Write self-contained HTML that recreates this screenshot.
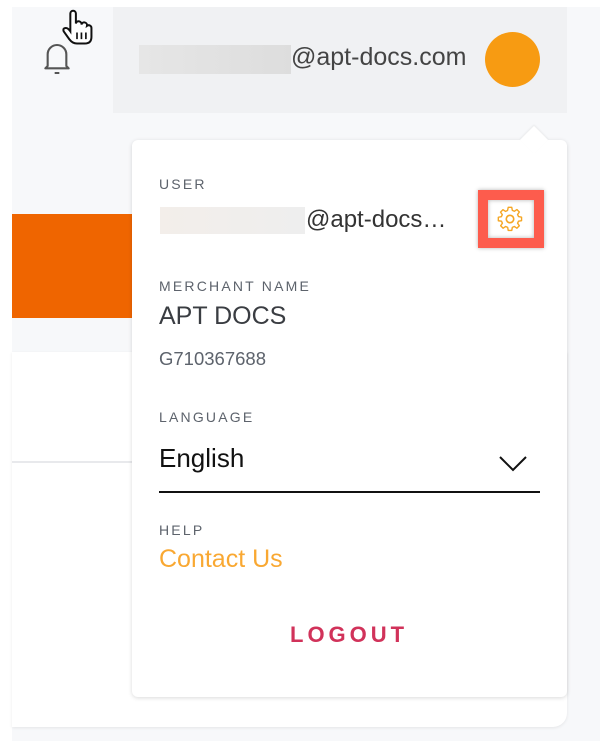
<!DOCTYPE html>
<html><head><meta charset="utf-8"><style>
*{margin:0;padding:0;box-sizing:border-box}
body{width:600px;height:754px;background:#fff;position:relative;overflow:hidden;font-family:"Liberation Sans",sans-serif}
.abs{position:absolute}
.bg{left:12px;top:7px;width:588px;height:734px;background:#f7f8fa}
.hdr{left:113px;top:7px;width:454px;height:106px;background:#f0f1f3}
.card{left:12px;top:352px;width:555px;height:375px;background:#fff;border-radius:0 0 14px 0;box-shadow:0 1px 3px rgba(0,0,0,.08)}
.pop{left:132px;top:140px;width:435px;height:557px;background:#fff;border-radius:6px;box-shadow:0 1px 4px rgba(0,0,0,.15)}
.lab{font-size:14px;letter-spacing:2.2px;color:#5d636c}
.blur{background:linear-gradient(90deg,#e6e6e6,#ddd);}
</style></head><body>
<div class="abs bg"></div>
<div class="abs hdr"></div>
<div class="abs" style="left:12px;top:214px;width:121px;height:104px;background:#ef6500"></div>
<div class="abs card"></div>
<div class="abs" style="left:12px;top:461px;width:121px;height:2px;background:#e8e9ec"></div>
<svg class="abs" style="left:36px;top:38px" width="42" height="42" viewBox="0 0 36 36"><path d="M10 24 V14 a8 8 0 0 1 16 0 V24 l2 2 H8 Z M16 30 h4" fill="none" stroke="#555" stroke-width="1.8" stroke-linejoin="round"/></svg>
<svg class="abs" style="left:60px;top:8px" width="34" height="40" viewBox="0 0 30 36"><path d="M9 18 V5 a2.5 2.5 0 0 1 5 0 V14 a2.5 2.5 0 0 1 5 1 a2.5 2.5 0 0 1 5 1 a2.5 2.5 0 0 1 4 2 V26 q0 6 -6 6 H15 q-4 0 -7-4 L3 21 q-1-3 2-3 q2 0 4 3Z" fill="#fff" stroke="#111" stroke-width="1.8"/><path d="M15 22v6M19 22v6M23 22v6" stroke="#111" stroke-width="1.5"/></svg>
<div class="abs blur" style="left:139px;top:45px;width:152px;height:29px"></div>
<div class="abs" style="left:291px;top:43px;font-size:25px;color:#444">@apt-docs.com</div>
<div class="abs" style="left:485px;top:32px;width:55px;height:55px;border-radius:50%;background:#f79b12"></div>
<div class="abs pop"></div>
<div class="abs" style="left:524px;top:130px;width:20px;height:20px;background:#fff;transform:rotate(45deg);box-shadow:-1px -1px 2px rgba(0,0,0,.06)"></div>
<div class="abs lab" style="left:159px;top:176px">USER</div>
<div class="abs blur" style="left:160px;top:207px;width:145px;height:27px;background:linear-gradient(90deg,#f3eeea,#eee)"></div>
<div class="abs" style="left:306px;top:206px;font-size:24px;color:#333">@apt-docs…</div>
<div class="abs" style="left:478px;top:190px;width:66px;height:58px;background:#fd5c4d;box-shadow:0 0 4px rgba(0,0,0,.3)"></div>
<div class="abs" style="left:488px;top:200px;width:46px;height:38px;background:#fff;box-shadow:inset 0 0 4px rgba(0,0,0,.3)"></div>
<svg class="abs" style="left:496px;top:205px" width="28" height="28" viewBox="0 0 24 24"><circle cx="12" cy="12" r="3.2" fill="none" stroke="#f5a623" stroke-width="1.4"/><path d="M10.5 2h3l.5 2.6 1.7.8 2.2-1.5 2.1 2.1-1.5 2.2.8 1.7 2.6.5v3l-2.6.5-.8 1.7 1.5 2.2-2.1 2.1-2.2-1.5-1.7.8-.5 2.6h-3l-.5-2.6-1.7-.8-2.2 1.5-2.1-2.1 1.5-2.2-.8-1.7L2 13.5v-3l2.6-.5.8-1.7-1.5-2.2 2.1-2.1 2.2 1.5 1.7-.8z" fill="none" stroke="#f5a623" stroke-width="1.2" stroke-linejoin="round"/></svg>
<div class="abs lab" style="left:159px;top:278px">MERCHANT NAME</div>
<div class="abs" style="left:159px;top:302px;font-size:25px;color:#3a3d42">APT DOCS</div>
<div class="abs" style="left:159px;top:348px;font-size:18.5px;color:#5d636c">G710367688</div>
<div class="abs lab" style="left:159px;top:409px">LANGUAGE</div>
<div class="abs" style="left:159px;top:443px;font-size:26px;color:#111">English</div>
<svg class="abs" style="left:498px;top:455px" width="30" height="18" viewBox="0 0 30 18"><path d="M2 2 L15 15 L28 2" fill="none" stroke="#111" stroke-width="2"/></svg>
<div class="abs" style="left:159px;top:491px;width:381px;height:2px;background:#111"></div>
<div class="abs lab" style="left:159px;top:522px">HELP</div>
<div class="abs" style="left:159px;top:545px;font-size:25px;color:#f9a832">Contact Us</div>
<div class="abs" style="left:290px;top:622px;font-size:22px;font-weight:bold;letter-spacing:4px;color:#d1325a">LOGOUT</div>
</body></html>
